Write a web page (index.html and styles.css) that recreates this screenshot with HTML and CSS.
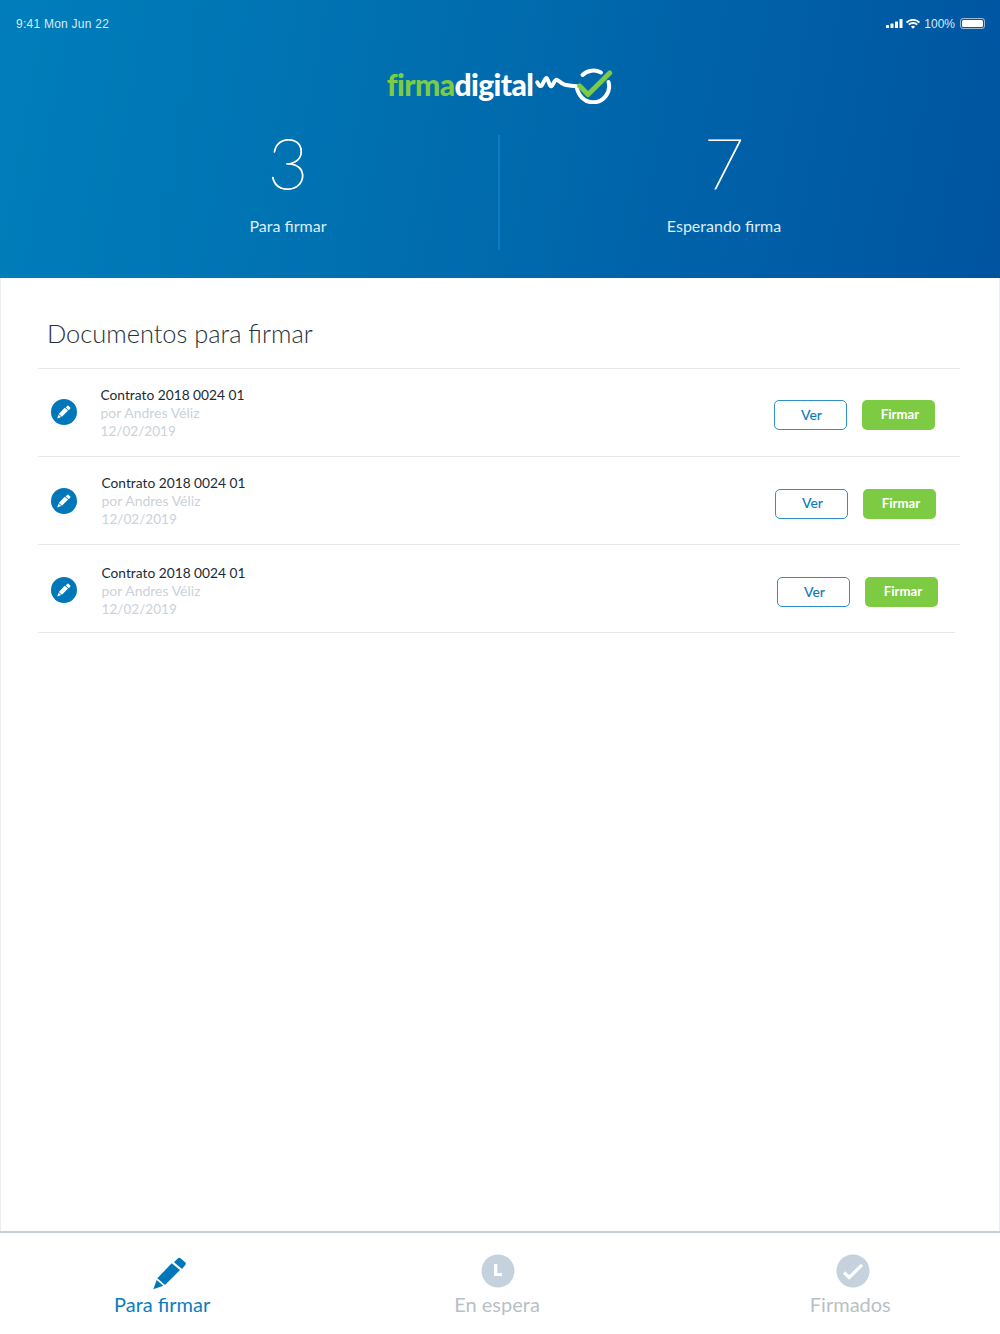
FILE: index.html
```html
<!DOCTYPE html>
<html lang="es">
<head>
  <meta charset="UTF-8" />
  <meta name="viewport" content="width=device-width, initial-scale=1.0"/>
  <title>Firma Digital</title>
  <link rel="stylesheet" href="styles.css">
</head>
<body>

<svg class="defs" width="0" height="0">
  <symbol id="pencil" viewBox="0 0 34 33">
    <path d="M.3 32.3 3.7 23l6.6 5.7z"/>
    <path d="M4.3 21.3 18.7 6.3 27 13 12 28z"/>
    <path d="M21 5.3 25 1.300a1.800 1.800 0 0 1 2.500-.1l4.700 4.100a1.800 1.800 0 0 1 .1 2.600L29 12z"/>
  </symbol>
</svg>

<header class="hero">
  <div class="status">
    <span>9:41 Mon Jun 22</span>
    <div class="status-right">
      <svg class="signal" width="17" height="9" viewBox="0 0 17 9"><rect x="0" y="6" width="3" height="3" rx=".6"/><rect x="4.500" y="4.500" width="3" height="4.500" rx=".6"/><rect x="9" y="2.500" width="3" height="6.500" rx=".6"/><rect x="13.500" y="0" width="3" height="9" rx=".6"/></svg>
      <svg class="wifi" width="14" height="10" viewBox="0 0 14 10"><path d="M.6 3.500a9 9 0 0 1 12.800 0M2.800 5.700a6 6 0 0 1 8.400 0" /><path class="wifi-dot" d="M7 9.800 4.900 7.700a3 3 0 0 1 4.200 0z"/></svg>
      <span>100%</span>
      <div class="battery"><div class="battery-fill"></div></div>
    </div>
  </div>

  <div class="logo">
    <span class="logo-text"><span class="logo-green">firma</span>digital</span>
    <svg class="logo-mark" width="78" height="38" viewBox="0 0 78 38">
      <path class="mark-line" d="M2.300 16.300C4 20 5.500 21 7 19S10 12 11.500 12 14.500 21 16.300 20.300 19.500 13.500 21.500 13.700 26 18 29.700 18.700 37 20 41.500 20.300C43 30 50 36.300 58 36.300A16 16 0 0 0 73.500 16"/>
      <path class="mark-line" d="M47.500 9A16 16 0 0 1 66 6.500"/>
      <path class="mark-check" d="M44.700 20 53 28.500 74.700 7"/>
    </svg>
  </div>

  <div class="stats">
    <div class="stat">
      <div class="stat-num">3</div>
      <div class="stat-label">Para firmar</div>
    </div>
    <div class="stat stat-second">
      <div class="stat-num">7</div>
      <div class="stat-label">Esperando firma</div>
    </div>
  </div>
</header>

<main class="docs">
  <h1 class="docs-title">Documentos para firmar</h1>

  <div class="doc doc-first">
    <span class="doc-icon"><svg width="14" height="14"><use href="#pencil"/></svg></span>
    <div class="doc-info">
      <div class="doc-name">Contrato 2018 0024 01</div>
      <div class="doc-meta">por Andres Véliz</div>
      <div class="doc-date">12/02/2019</div>
    </div>
    <a class="btn btn-ver">Ver</a>
    <a class="btn btn-firmar">Firmar</a>
  </div>

  <div class="doc doc-second">
    <span class="doc-icon"><svg width="14" height="14"><use href="#pencil"/></svg></span>
    <div class="doc-info">
      <div class="doc-name">Contrato 2018 0024 01</div>
      <div class="doc-meta">por Andres Véliz</div>
      <div class="doc-date">12/02/2019</div>
    </div>
    <a class="btn btn-ver">Ver</a>
    <a class="btn btn-firmar">Firmar</a>
  </div>

  <div class="doc doc-third">
    <span class="doc-icon"><svg width="14" height="14"><use href="#pencil"/></svg></span>
    <div class="doc-info">
      <div class="doc-name">Contrato 2018 0024 01</div>
      <div class="doc-meta">por Andres Véliz</div>
      <div class="doc-date">12/02/2019</div>
    </div>
    <a class="btn btn-ver">Ver</a>
    <a class="btn btn-firmar">Firmar</a>
  </div>
</main>

<nav class="tabs">
  <a class="tab tab-active tab-sign">
    <svg class="tab-pencil" width="34" height="33"><use href="#pencil"/></svg>
    <span>Para firmar</span>
  </a>
  <a class="tab tab-wait">
    <svg class="tab-icon" width="34" height="34" viewBox="0 0 34 34"><circle cx="17" cy="17" r="16.500"/><path class="tab-icon-mark" d="M14.700 10v10.500h6.300"/></svg>
    <span>En espera</span>
  </a>
  <a class="tab tab-done">
    <svg class="tab-icon" width="34" height="34" viewBox="0 0 34 34"><circle cx="17" cy="17" r="16.500"/><path class="tab-icon-mark" d="M8 18.500l5.200 5L26 10.800"/></svg>
    <span>Firmados</span>
  </a>
</nav>

</body>
</html>
```

FILE: styles.css
```css
* { box-sizing: border-box; }
html, body { height: 100%; }
body {
  margin: 0;
  font-family: 'Lato', 'Open Sans', sans-serif;
  background: #fff;
  color: #1d2b36;
  display: flex;
  flex-direction: column;
  min-height: 1334px;
}
.defs { position: absolute; }

.hero {
  height: 278px;
  background: linear-gradient(100deg, #007ebb 0%, #006fb0 40%, #0054a0 100%);
  color: #fff;
  flex-shrink: 0;
}

.status {
  display: flex;
  justify-content: space-between;
  align-items: center;
  padding: 16px 15px 0 16px;
  height: 31px;
  font-family: 'Liberation Sans', sans-serif;
  font-size: 12px;
  letter-spacing: .25px;
  color: #d7ecf7;
}
.status-right {
  display: flex;
  align-items: center;
  gap: 5px;
  letter-spacing: 0;
}
.signal { fill: #fff; margin-right: -2px; }
.wifi { fill: none; stroke: #fff; stroke-width: 1.800; margin-right: -1px; }
.wifi-dot { fill: #fff; stroke: none; }
.battery {
  width: 25px;
  height: 11px;
  padding: 1px;
  border: 1px solid rgba(255,255,255,.6);
  border-radius: 3px;
}
.battery-fill {
  height: 100%;
  background: #fff;
  border-radius: 1.500px;
}

.logo {
  display: flex;
  justify-content: center;
  align-items: center;
  height: 38px;
  margin-top: 35px;
}
.logo-text {
  font-size: 30px;
  font-weight: 900;
  letter-spacing: -.6px;
  line-height: 38px;
  color: #fff;
  margin: -2px 2px 0 0;
}
.logo-green { color: #7dcb43; }
.mark-line { fill: none; stroke: #fff; stroke-width: 4; stroke-linecap: round; }
.mark-check { fill: none; stroke: #7dcb43; stroke-width: 5; stroke-linecap: round; stroke-linejoin: round; }

.stats {
  display: grid;
  grid-template-columns: 420px 450px;
  margin-top: 31px;
  padding-left: 78px;
}
.stat {
  height: 115px;
  text-align: center;
}
.stat-second { border-left: 2px solid #0d7cc2; }
.stat-num {
  font-size: 70px;
  font-weight: 200;
  line-height: 60px;
  margin-top: -3px;
  -webkit-text-stroke: .8px #fff;
}
.stat-label {
  margin-top: 24px;
  font-size: 16px;
  line-height: 20px;
  color: #dcedf7;
}

.docs {
  flex: 1;
  padding: 0 0 0 37px;
  border-left: 1px solid #eceff2;
  border-right: 1px solid #eceff2;
}
.docs-title {
  margin: 0;
  padding: 39px 0 0 9px;
  height: 91px;
  font-size: 25.400px;
  font-weight: 300;
  line-height: 32px;
  color: #26323b;
  border-bottom: 1px solid #e6e8ea;
  width: 922px;
}

.doc {
  display: flex;
  align-items: center;
  height: 88px;
  width: 922px;
  padding-right: 25px;
  border-bottom: 1px solid #e6e8ea;
}
.doc-second { padding-right: 24px; }
.doc-third { width: 917px; padding-right: 17px; }

.doc-icon {
  display: flex;
  align-items: center;
  justify-content: center;
  width: 26px;
  height: 26px;
  margin-left: 13px;
  border-radius: 50%;
  background: #0077b8;
  fill: #fff;
  flex-shrink: 0;
}
.doc-first .doc-icon { margin-top: -1px; }
.doc-third .doc-icon { margin-top: 2px; }

.doc-info {
  flex: 1;
  margin-left: 23.500px;
  font-size: 14px;
  line-height: 18px;
}
.doc-second .doc-info { margin-left: 24.500px; margin-top: 1px; }
.doc-third .doc-info { margin-left: 24.500px; margin-top: 4px; }
.doc-name { font-size: 13.750px; color: #1d2b36; }
.doc-meta { color: #cbd2d9; }
.doc-date { font-size: 13.600px; color: #cbd2d9; }

.btn {
  display: flex;
  align-items: center;
  justify-content: center;
  width: 73px;
  height: 30px;
  margin-top: 5px;
  padding-bottom: 2px;
  border-radius: 5px;
  font-size: 14px;
  font-weight: 700;
}
.doc-second .btn { margin-top: 6px; }
.doc-third .btn { margin-top: 7px; }
.btn-ver {
  border: 1px solid #2f8fc9;
  padding-left: 2px;
  color: #0c7dbd;
  font-weight: 500;
}
.btn-firmar {
  margin-left: 15px;
  padding-left: 3px;
  background: #7dcb43;
  font-size: 13.200px;
  color: #fff;
}

.tabs {
  display: flex;
  height: 103px;
  flex-shrink: 0;
  padding-left: 114px;
  border-top: 2px solid #c5d0da;
  background: #fff;
}
.tab {
  display: flex;
  flex-direction: column;
  align-items: center;
  font-size: 20px;
  line-height: 24px;
  color: #b9bfc4;
}
.tab-active { color: #0c7dbd; }
.tab-wait { margin-left: 244px; }
.tab-done { margin-left: 270px; }
.tab-pencil { fill: #0077b8; margin: 24px 0 2px 16px; }
.tab-icon { fill: #c5d1dd; margin-top: 21px; margin-bottom: 4px; }
.tab-wait .tab-icon { margin-left: 2px; }
.tab-done .tab-icon { margin-left: 6px; }
.tab-icon-mark { fill: none; stroke: #fff; stroke-width: 3.200; }
```
